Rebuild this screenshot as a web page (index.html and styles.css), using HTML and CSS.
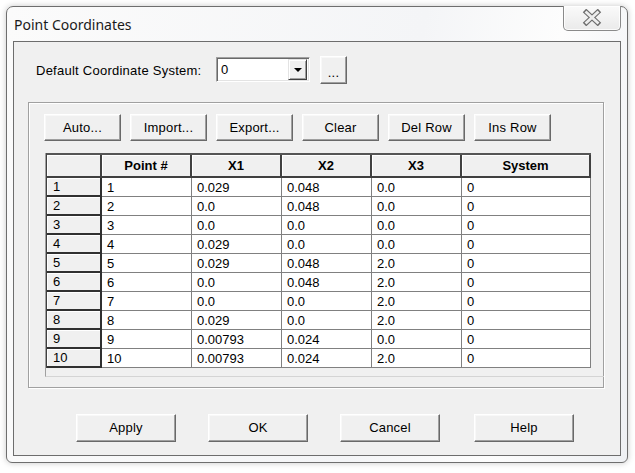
FILE: index.html
```html
<!DOCTYPE html>
<html>
<head>
<meta charset="utf-8">
<link rel="stylesheet" href="styles.css">
</head>
<body>
<div class="window">
  <div class="titlebar">
    <span class="title">Point Coordinates</span>
    <div class="close">
      <svg width="20" height="17" viewBox="0 0 20 17">
        <line x1="2.5" y1="1.5" x2="17.5" y2="15.5" class="x-dark"/>
        <line x1="17.5" y1="1.5" x2="2.5" y2="15.5" class="x-dark"/>
        <line x1="3.5" y1="2.4" x2="16.5" y2="14.6" class="x-light"/>
        <line x1="16.5" y1="2.4" x2="3.5" y2="14.6" class="x-light"/>
      </svg>
    </div>
  </div>
  <div class="client">
    <div class="top-row">
      <span class="label">Default Coordinate System:</span>
      <div class="combo">
        <span class="combo-text">0</span>
        <div class="combo-btn"><span class="tri"></span></div>
      </div>
      <button class="btn btn-dots">...</button>
    </div>
    <div class="group">
      <div class="toolbar">
        <button class="btn btn-tool">Auto...</button>
        <button class="btn btn-tool">Import...</button>
        <button class="btn btn-tool">Export...</button>
        <button class="btn btn-tool">Clear</button>
        <button class="btn btn-tool">Del Row</button>
        <button class="btn btn-tool">Ins Row</button>
      </div>
      <div class="grid">
        <table>
          <thead>
            <tr><th class="c0"></th><th class="c1">Point #</th><th class="c2">X1</th><th class="c3">X2</th><th class="c4">X3</th><th class="c5">System</th></tr>
          </thead>
          <tbody>
            <tr><td class="rh">1</td><td>1</td><td>0.029</td><td>0.048</td><td>0.0</td><td>0</td></tr>
            <tr><td class="rh">2</td><td>2</td><td>0.0</td><td>0.048</td><td>0.0</td><td>0</td></tr>
            <tr><td class="rh">3</td><td>3</td><td>0.0</td><td>0.0</td><td>0.0</td><td>0</td></tr>
            <tr><td class="rh">4</td><td>4</td><td>0.029</td><td>0.0</td><td>0.0</td><td>0</td></tr>
            <tr><td class="rh">5</td><td>5</td><td>0.029</td><td>0.048</td><td>2.0</td><td>0</td></tr>
            <tr><td class="rh">6</td><td>6</td><td>0.0</td><td>0.048</td><td>2.0</td><td>0</td></tr>
            <tr><td class="rh">7</td><td>7</td><td>0.0</td><td>0.0</td><td>2.0</td><td>0</td></tr>
            <tr><td class="rh">8</td><td>8</td><td>0.029</td><td>0.0</td><td>2.0</td><td>0</td></tr>
            <tr><td class="rh">9</td><td>9</td><td>0.00793</td><td>0.024</td><td>0.0</td><td>0</td></tr>
            <tr><td class="rh">10</td><td>10</td><td>0.00793</td><td>0.024</td><td>2.0</td><td>0</td></tr>
          </tbody>
        </table>
      </div>
    </div>
    <div class="footer">
      <button class="btn btn-foot">Apply</button>
      <button class="btn btn-foot">OK</button>
      <button class="btn btn-foot">Cancel</button>
      <button class="btn btn-foot btn-help">Help</button>
    </div>
  </div>
</div>
</body>
</html>
```
FILE: styles.css
```css
* { box-sizing: border-box; }
html, body { margin: 0; padding: 0; }
body {
  background: #ffffff;
  width: 635px;
  height: 473px;
  overflow: hidden;
  font-family: "Liberation Sans", Arial, sans-serif;
  font-size: 13px;
  color: #000;
}
.window {
  margin: 6px 0 0 6px;
  width: 622px;
  height: 457px;
  border: 1px solid #6e6e6e;
  border-radius: 7px 7px 6px 6px;
  background: linear-gradient(100deg, #fbfbfb 0%, #f4f5f7 60%, #fdfdfd 80%, #eef0f3 100%);
  box-shadow: 0 0 6px rgba(0,0,0,0.22);
  padding: 0 6px 6px 6px;
  display: flex;
  flex-direction: column;
}
.titlebar {
  height: 34px;
  display: flex;
  align-items: flex-start;
  padding-left: 1px;
}
.title {
  font-family: "Noto Sans", "Open Sans", sans-serif;
  font-size: 14px;
  line-height: 20px;
  margin-top: 8px;
  color: #1a1a1a;
}
.close {
  margin-left: auto;
  margin-top: -1px;
  width: 58px;
  height: 25px;
  border: 1px solid #8a8a8a;
  border-top: none;
  border-radius: 0 0 5px 5px;
  background: linear-gradient(#fafafa, #eaeaea);
  display: flex;
  align-items: center;
  justify-content: center;
  box-shadow: inset 0 0 0 1px rgba(255,255,255,0.8);
}
.close svg { display: block; margin-top: -1px; }
.x-dark { stroke: #6b6b6b; stroke-width: 5; stroke-linecap: butt; }
.x-light { stroke: #ededed; stroke-width: 2.8; stroke-linecap: butt; }
.client {
  flex: 1;
  border: 1px solid #6d6d6d;
  background: #f0f0f0;
  display: flex;
  flex-direction: column;
}
.top-row {
  margin-top: 14px;
  height: 28px;
  padding-left: 22px;
  display: flex;
  align-items: center;
}
.label { width: 180px; letter-spacing: 0.25px; }
.combo {
  width: 94px;
  height: 25px;
  margin-top: -1px;
  background: #fff;
  border: 1px solid;
  border-color: #a0a0a0 #ffffff #ffffff #a0a0a0;
  box-shadow: inset 1px 1px 0 #696969, inset -1px -1px 0 #e3e3e3;
  display: flex;
  align-items: center;
  padding: 2px;
}
.combo-text { flex: 1; padding-left: 2px; }
.combo-btn {
  width: 19px;
  height: 21px;
  background: #f0f0f0;
  border: 1px solid;
  border-color: #e3e3e3 #404040 #404040 #e3e3e3;
  box-shadow: inset 1px 1px 0 #fff, inset -1px -1px 0 #a0a0a0;
  display: flex;
  align-items: center;
  justify-content: center;
}
.tri {
  width: 0;
  height: 0;
  border-left: 4px solid transparent;
  border-right: 4px solid transparent;
  border-top: 4px solid #000;
  margin-top: 1px;
}
.btn {
  font-family: "Liberation Sans", Arial, sans-serif;
  font-size: 13px;
  letter-spacing: 0.2px;
  color: #000;
  background: #f0f0f0;
  border: 1px solid;
  border-color: #ffffff #696969 #696969 #ffffff;
  box-shadow: inset -1px -1px 0 #a0a0a0, inset 1px 1px 0 #f8f8f8;
  padding: 0;
  margin: 0;
}
.btn-dots {
  width: 27px;
  height: 28px;
  margin-left: 10px;
  padding-top: 4px;
}
.group {
  margin-top: 18px;
  margin-left: 14px;
  width: 576px;
  height: 286px;
  border: 1px solid #a0a0a0;
  box-shadow: inset 1px 1px 0 #fff, 1px 1px 0 #fff;
  padding: 11px 0 0 15px;
  display: flex;
  flex-direction: column;
}
.toolbar {
  display: flex;
  gap: 9px;
  height: 27px;
}
.btn-tool { width: 77px; height: 27px; padding-bottom: 1px; }
.grid {
  margin-top: 12px;
  margin-left: 1px;
  width: 559px;
  height: 224px;
  border-left: 1px solid #a0a0a0;
  border-bottom: 1px solid #d4d4d4;
}
table {
  border-collapse: separate;
  border-spacing: 0;
  table-layout: fixed;
  width: 544px;
  border-top: 2px solid #555;
  border-left: 1px solid #404040;
}
th {
  height: 23px;
  padding: 0;
  background: #f0f0f0;
  font-weight: bold;
  text-align: center;
  border-right: 2px solid #404040;
  border-bottom: 2px solid #404040;
  box-shadow: inset 1px 1px 0 #fff;
}
.c0 { width: 55px; }
.c1, .c2, .c3, .c4 { width: 90px; }
.c5 { width: 129px; }
td {
  height: 19px;
  padding: 0 0 0 5px;
  background: #fff;
  border-right: 1px solid #808080;
  border-bottom: 1px solid #808080;
  line-height: 17px;
  white-space: nowrap;
}
td.rh {
  background: #f0f0f0;
  padding-left: 6px;
  border-right: 2px solid #303030;
  border-bottom: 2px solid #303030;
  box-shadow: inset 1px 1px 0 #fff;
}
.footer {
  margin-top: 26px;
  padding-left: 62px;
  display: flex;
  gap: 32px;
}
.btn-foot { width: 100px; height: 28px; padding-bottom: 1px; }
.btn-help { margin-left: 2px; }
```
